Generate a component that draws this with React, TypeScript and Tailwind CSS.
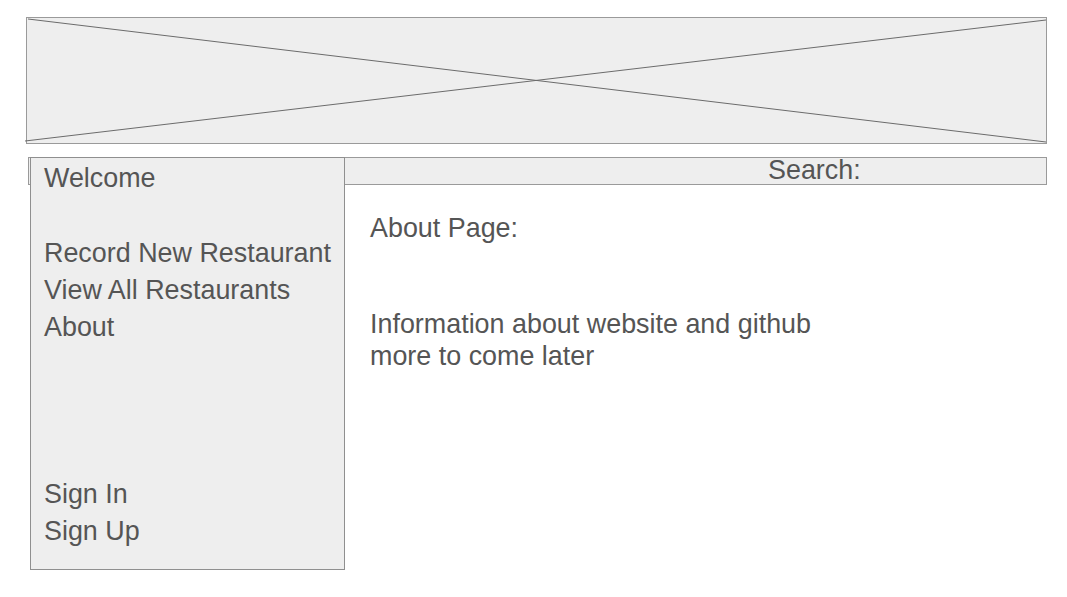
export default function App() {
  return (
    <div
      className="w-[1067px] h-[597px] bg-white pt-[17px] text-[#555555] text-[26.9px]"
      style={{ fontFamily: '"Liberation Sans", Arial, sans-serif' }}
    >
      {/* placeholder banner */}
      <div className="relative ml-[26px] w-[1021px] h-[127px] border border-[#9a9a9a] bg-[#eeeeee]">
        <svg
          className="absolute left-[-1px] top-[-1px] overflow-visible"
          width="1021"
          height="127"
          viewBox="0 0 1021 127"
        >
          <line x1="2" y1="2" x2="1020" y2="125" stroke="#6b6b6b" strokeWidth="1" />
          <line x1="-1" y1="124" x2="1020" y2="3" stroke="#6b6b6b" strokeWidth="1" />
        </svg>
      </div>

      {/* search bar */}
      <div className="mt-[13px] ml-[28px] w-[1019px] h-[28px] border border-[#9a9a9a] bg-[#eeeeee] pl-[739px] leading-[25px]">
        Search:
      </div>

      <div className="flex -mt-[28px]">
        {/* sidebar */}
        <div className="relative z-10 ml-[30px] w-[315px] h-[413px] border border-[#8f8f8f] bg-[#eeeeee] pl-[13px] pt-[2px] leading-[37px] flex flex-col">
          <div>Welcome</div>
          <div className="mt-[38px]">Record New Restaurant</div>
          <div>View All Restaurants</div>
          <div>About</div>
          <div className="mt-[130px]">Sign In</div>
          <div>Sign Up</div>
        </div>

        {/* main */}
        <div className="pl-[25px] pt-[55px] leading-[32px]">
          <div>About Page:</div>
          <div className="mt-[64px]">
            <div>Information about website and github</div>
            <div>more to come later</div>
          </div>
        </div>
      </div>
    </div>
  );
}
